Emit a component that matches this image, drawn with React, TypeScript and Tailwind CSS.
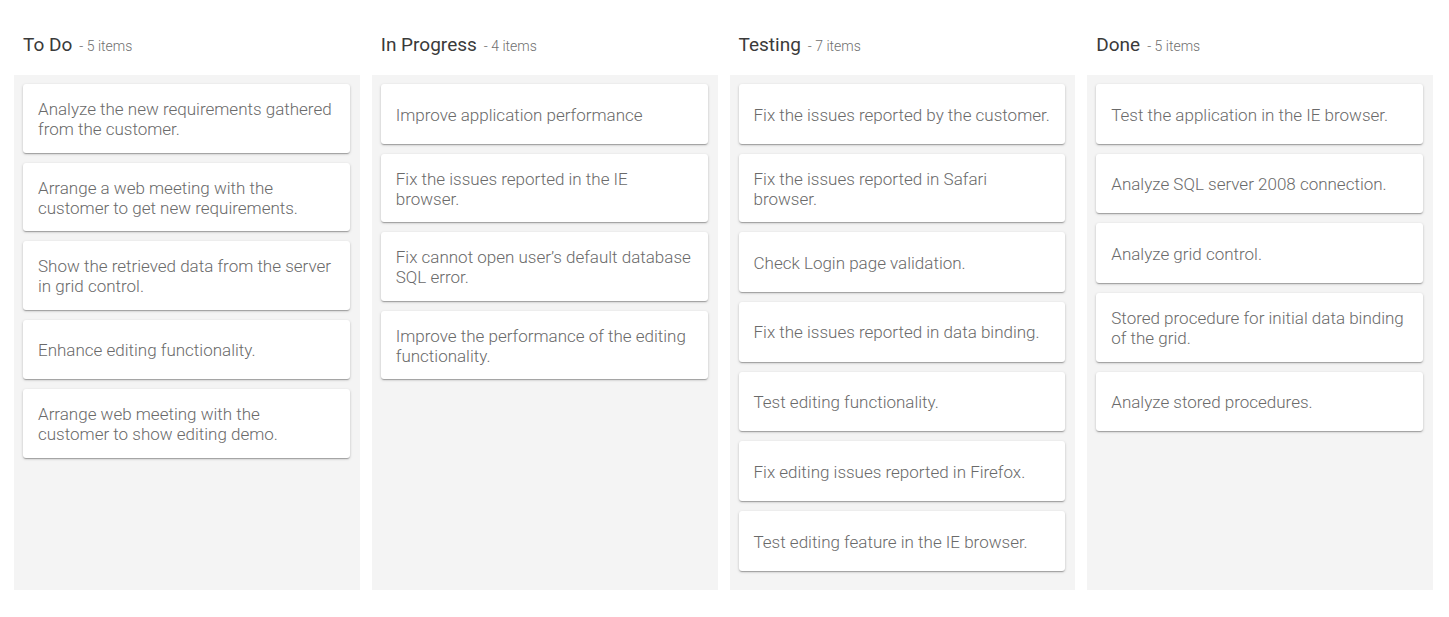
const columns = [
  {
    title: 'To Do',
    items: [
      'Analyze the new requirements gathered from the customer.',
      'Arrange a web meeting with the customer to get new requirements.',
      'Show the retrieved data from the server in grid control.',
      'Enhance editing functionality.',
      'Arrange web meeting with the customer to show editing demo.',
    ],
  },
  {
    title: 'In Progress',
    items: [
      'Improve application performance',
      'Fix the issues reported in the IE browser.',
      'Fix cannot open user\u2019s default database SQL error.',
      'Improve the performance of the editing functionality.',
    ],
  },
  {
    title: 'Testing',
    items: [
      'Fix the issues reported by the customer.',
      'Fix the issues reported in Safari browser.',
      'Check Login page validation.',
      'Fix the issues reported in data binding.',
      'Test editing functionality.',
      'Fix editing issues reported in Firefox.',
      'Test editing feature in the IE browser.',
    ],
  },
  {
    title: 'Done',
    items: [
      'Test the application in the IE browser.',
      'Analyze SQL server 2008 connection.',
      'Analyze grid control.',
      'Stored procedure for initial data binding of the grid.',
      'Analyze stored procedures.',
    ],
  },
];

function Card({ text }: { text: string }) {
  return (
    <div className="mb-[10px] rounded-[3px] bg-white px-[15px] pt-[15px] pb-[13.5px] shadow-[0_1px_3px_0_rgba(0,0,0,0.2),0_1px_1px_0_rgba(0,0,0,0.14),0_2px_1px_-1px_rgba(0,0,0,0.12)]">
      <div className="flex min-h-[31.2px] items-center text-[17px] font-light leading-[20px] text-[#6a6a6a]">
        {text}
      </div>
    </div>
  );
}

export default function App() {
  return (
    <div className="min-h-screen bg-white pl-[14px] pr-[16px] font-['Roboto',sans-serif]">
      <div className="flex gap-3">
        {columns.map((col) => (
          <div key={col.title} className="flex flex-1 flex-col">
            {/* Header */}
            <div className="mt-[33px] mb-[18px] flex h-[24px] items-baseline pl-[9px]">
              <span className="text-[19px] font-normal leading-[24px] text-[#3a3a3a]">{col.title}</span>
              <span className="ml-[7px] text-[14px] font-light text-[#6f6f6f]">- {col.items.length} items</span>
            </div>

            {/* Column body */}
            <div className="flex-1 bg-[#f4f4f4] pt-[9px] pb-[9px] pl-[9px] pr-[10px]">
              {col.items.map((t) => (
                <Card key={t} text={t} />
              ))}
            </div>
          </div>
        ))}
      </div>
    </div>
  );
}
